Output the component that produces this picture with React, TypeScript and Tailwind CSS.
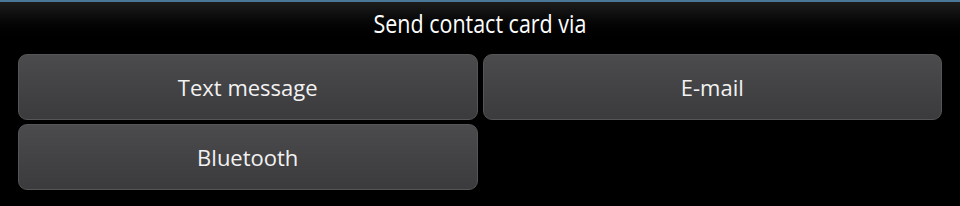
import React from 'react';

const options = ['Text message', 'E-mail', 'Bluetooth'];

function OptionButton({ label }: { label: string }) {
  return (
    <button className="h-[66px] rounded-[9px] border border-[#555456] bg-gradient-to-b from-[#4b4a4c] to-[#3b3a3c] text-[22px] text-[#f2f2f2] font-['Open_Sans',sans-serif] leading-none">
      {label}
    </button>
  );
}

export default function App() {
  return (
    <div className="w-[960px] h-[206px] bg-black flex flex-col overflow-hidden">
      <div className="h-[2px] bg-[#4a7896]" />
      <div className="h-[44px] bg-gradient-to-b from-[#1d1d1d] to-black flex items-center justify-center">
        <span className="text-[26px] text-white font-['Open_Sans',sans-serif] scale-x-[0.825] leading-none -mt-[2px]">
          Send contact card via
        </span>
      </div>
      <div className="grid grid-cols-2 gap-x-[5px] gap-y-[4px] px-[18px] pt-[8px]">
        {options.map((o) => (
          <OptionButton key={o} label={o} />
        ))}
      </div>
    </div>
  );
}
